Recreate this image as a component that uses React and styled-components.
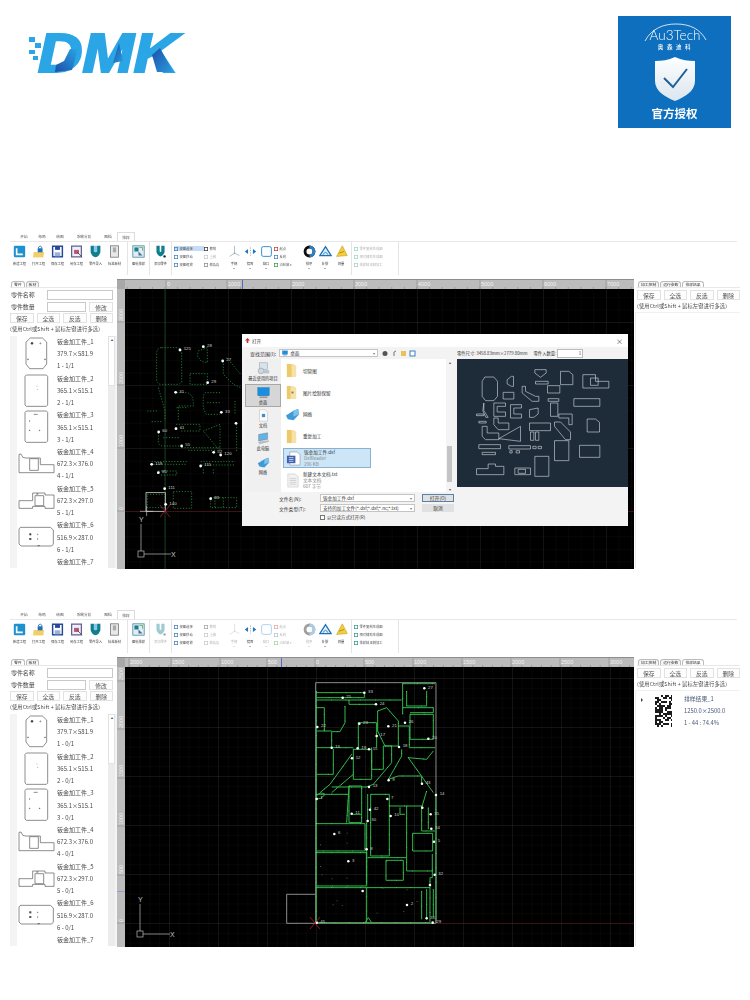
import React from 'react';
import styled, { createGlobalStyle } from 'styled-components';

const SANS = '"Noto Sans CJK SC", "Liberation Sans", sans-serif';

const GlobalStyle = createGlobalStyle`
  html, body {
    margin: 0;
    padding: 0;
    background: #fff;
    font-family: ${SANS};
  }
`;

/* ---------- data ---------- */

const parts = [
  { name: '钣金加工件_1', size: '379.7×581.9', shape: 1 },
  { name: '钣金加工件_2', size: '365.1×515.1', shape: 2 },
  { name: '钣金加工件_3', size: '365.1×515.1', shape: 3 },
  { name: '钣金加工件_4', size: '672.3×376.0', shape: 4 },
  { name: '钣金加工件_5', size: '672.3×297.0', shape: 5 },
  { name: '钣金加工件_6', size: '516.9×287.0', shape: 6 },
  { name: '钣金加工件_7', shape: 7 },
];

const files = [
  { icon: 'folder', name: '切管图' },
  { icon: 'folderDoc', name: '图片绘制保留' },
  { icon: 'net', name: '网络' },
  { icon: 'folder', name: '重复加工' },
  { icon: 'dxf', name: '钣金加工件.dxf', sub: ['DxfReader', '296 KB'], selected: true },
  { icon: 'txt', name: '新建文本文档.txt', sub: ['文本文档', '607 字节'] },
];

const places = [
  { icon: 'recent', label: '最近使用的项目' },
  { icon: 'desk', label: '桌面', active: true },
  { icon: 'docs', label: '文档' },
  { icon: 'pc', label: '此电脑' },
  { icon: 'net', label: '网络' },
];

const firstDots = [
  [180, 57, '125'], [250, 47, '28'], [308, 90, '27'], [263, 155, '29'], [167, 184, '31'],
  [304, 244, '33'], [168, 293, '61'], [116, 303, '60'], [348, 277, ''], [185, 345, '55'],
  [281, 364, '52'], [302, 372, '120'], [95, 400, '119'], [242, 405, '115'], [115, 425, '85'],
  [134, 473, '111'], [137, 520, '140'], [272, 503, '83'],
];

const firstLines = [
  'M125 50 H170 Q185 50 185 70 V150 Q185 160 170 160 H125 Q110 160 110 145 V70 Q110 50 125 50',
  'M235 60 L262 50 V95 L245 92 L232 75 Z',
  'M310 90 V130 L340 160 L362 170', 'M320 80 L362 130',
  'M210 128 H262 V160 H210 Z',
  'M115 170 L135 240 V270', 'M82 240 H115', 'M95 272 H125',
  'M170 185 H200 Q220 190 220 215 V225 H175 V270', 'M170 230 H205',
  'M300 185 H255 Q248 190 250 230 L258 250 H300', 'M262 215 H300',
  'M115 305 V335 Q118 345 130 345 H180', 'M130 320 H180',
  'M168 280 H240 V300 H180',
  'M300 280 L250 300 L300 360 Z',
  'M185 350 H300', 'M205 358 H290',
  'M95 392 H200', 'M100 400 H200',
  'M242 392 H345', 'M245 402 H345', 'M250 415 V428', 'M280 415 V428',
  'M115 420 H170 V432 H120',
  'M82 490 H135 V530 H82 Z', 'M160 482 H215 V532 H160 Z',
  'M272 500 H350 V530 H272 Z', 'M285 500 V530', 'M310 500 V530',
  'M345 210 V250', 'M350 280 V360',
];

const secondDots = [
  [283, 65, '33'], [218, 80, '25'], [318, 100, '24'], [142, 168, '22'], [268, 158, '23'],
  [355, 166, '21'], [405, 155, '26'], [463, 52, '27'], [475, 203, '20'], [320, 195, '17'],
  [185, 230, '16'], [263, 232, '19'], [297, 235, '15'], [387, 228, '18'], [246, 262, '12'],
  [297, 348, '13'], [356, 328, '9'], [456, 338, '43'], [498, 372, '14'], [352, 384, '7'],
  [140, 384, '1'], [300, 416, '42'], [245, 428, '11'], [362, 435, '10'], [293, 450, '30'],
  [457, 410, ''], [482, 430, '35'], [484, 473, '34'], [193, 489, '6'], [492, 512, '5'],
  [290, 535, '8'], [235, 571, '3'], [494, 611, '32'], [480, 642, ''], [278, 660, ''],
  [411, 702, '2'], [470, 742, '31'], [488, 755, '29'], [140, 755, '45'],
];

const secondLines = [
  'M139 60 V755', 'M139 65 H283 V80 H139', 'M139 87 H395', 'M237 87 V100 H320',
  'M139 110 H163 V180 H139', 'M163 180 H185', 'M225 105 V155 L210 182 H185 V230',
  'M139 230 H250', 'M190 235 V310 H139', 'M245 250 L180 340 L150 365', 'M250 310 L185 365',
  'M250 235 H305 V325 H250 Z', 'M305 230 V295 H340 V225 H365 V275 L310 340 L290 348 H185',
  'M265 155 H320 V230', 'M265 155 V235', 'M323 120 L350 110 L385 150 V225 H345 L323 180 Z',
  'M398 38 V130', 'M398 38 H495', 'M410 60 V105 H470 V60', 'M400 110 H490 V125 H420',
  'M420 130 H490 V205 H420 Z', 'M385 165 H418 V230 H495', 'M415 260 L490 365',
  'M415 260 L470 265 L490 240', 'M355 325 L395 255 V235', 'M355 325 L385 315 H455 V340',
  'M139 370 H237', 'M237 345 H275 V455 H237 Z', 'M237 345 L230 455', 'M245 430 H275',
  'M139 458 H285 V540 H139', 'M139 545 H290 V645 H139', 'M139 650 H290 V755 H139',
  'M290 650 H480 V755 H290', 'M302 370 H358 V555 H302 Z', 'M293 370 V450', 'M290 455 V640',
  'M358 405 H410 V600 H490', 'M410 405 H455 V480 H495', 'M428 487 H488 V540 H428 Z',
  'M348 568 H400 V628 H348 Z', 'M293 560 H410', 'M475 410 V475', 'M470 360 L455 410',
  'M498 370 V755', 'M487 550 V620 H480 V650', 'M490 655 V740', 'M455 660 V745', 'M470 655 V745',
  'M390 410 V430 H405', 'M285 755 L295 740 L305 755', 'M139 375 Q150 360 165 370 Q150 390 139 380',
];

const specks = [
  [150, 585], [185, 622], [230, 620], [155, 610], [200, 688], [215, 702], [188, 700], [320, 725],
  [230, 485], [230, 515], [150, 520], [338, 650], [410, 655], [440, 690], [400, 720],
];

const outlines = [
  'M728 157 H755 L766 170 V215 L755 228 H730 L720 215 V170 Z',
  'M795 165 L808 155 H814 V185 H808 L795 178 Z',
  'M878 135 H912 V145 L895 158 L878 145 Z',
  'M880 170 H918 V178 H880 Z',
  'M955 140 H980 L992 150 V180 H955 Z',
  'M1022 150 H1060 V170 H1100 V190 H1022 Z', 'M1045 160 H1068 V182 H1045 Z',
  'M783 203 H815 V223 H783 Z',
  'M840 185 H850 V200 L880 215 H890 V230 H870 L840 205 Z',
  'M916 183 H953 V205 H916 Z', 'M918 222 H950 V230 H918 Z',
  'M995 222 H1073 V245 H995 Z',
  'M755 235 H790 V245 H765 V262 H790 V275 H755 Z',
  'M805 240 H838 V250 H815 V268 H838 V280 H805 Z',
  'M862 255 L888 250 V268 L875 278 H862 Z',
  'M925 235 H947 V275 H925 Z', 'M950 268 H990 V300 H980 V280 H950 Z',
  'M1035 283 H1060 L1072 293 V322 H1035 Z',
  'M703 268 H725 V273 H703 Z', 'M710 290 H732 V295 H710 Z', 'M725 235 V258 L738 278 H731 L722 258 Z',
  'M755 280 H768 V295 H800 V315 H768 L755 300 Z',
  'M720 305 H735 V325 H770 V345 H730 L720 335 Z',
  'M835 305 L770 342 L835 350 Z',
  'M862 295 H925 V318 H862 Z', 'M865 322 H875 V347 H865 Z', 'M880 322 H890 V347 H880 Z',
  'M937 292 H955 L985 322 V345 H970 L937 305 Z',
  'M710 360 H775 V372 H710 Z', 'M720 383 H760 V390 H720 Z', 'M800 363 H865 V373 H800 Z',
  'M872 365 H882 V372 H872 Z', 'M888 365 H898 V372 H888 Z', 'M803 378 H810 V385 H803 Z', 'M822 378 H832 V385 H822 Z',
  'M937 348 H980 V408 H937 Z', 'M1012 362 H1073 V398 H1012 Z',
  'M703 432 H738 V418 H760 V425 H785 V450 H703 Z', 'M818 430 H865 V450 H818 Z', 'M828 434 H850 V446 H828 Z',
  'M878 395 H920 V455 H878 Z',
];

/* ---------- header ---------- */

const Page = styled.div`
  width: 750px;
  height: 1000px;
  overflow: hidden;
  background: #fff;
`;

const Header = styled.header`
  height: 232px;
  box-sizing: border-box;
  padding: 16px 19px 0 28px;
  display: flex;
  justify-content: space-between;
  align-items: flex-start;
`;

const LogoWrap = styled.div`
  margin-top: 15px;
  filter: blur(0.4px);
`;

const Badge = styled.div`
  width: 113px;
  height: 112px;
  background: #0e6fbe;
  color: #fff;
  display: flex;
  flex-direction: column;
  align-items: center;
  padding-top: 7px;
  box-sizing: border-box;
  filter: blur(0.3px);
`;

const BrandCn = styled.div`
  font-size: 5.5px;
  letter-spacing: 3.6px;
  margin: 0 0 5px 3px;
  line-height: 8px;
  font-weight: 500;
`;

const BadgeText = styled.div`
  font-size: 11.5px;
  font-weight: 700;
  line-height: 14px;
  margin-top: 4px;
`;

function Logo() {
  return (
    <LogoWrap>
      <svg width="170" height="46" viewBox="0 0 170 46">
        <defs>
          <linearGradient id="legFade" x1="0" y1="0" x2="1" y2="1">
            <stop offset="0" stopColor="#1c4fa8" />
            <stop offset="1" stopColor="#2a9be0" />
          </linearGradient>
          <linearGradient id="bowlFade" x1="0" y1="1" x2="1" y2="0">
            <stop offset="0" stopColor="#1c4fa8" />
            <stop offset="1" stopColor="#2aa5e6" />
          </linearGradient>
        </defs>
        <g fill="#2aa5e6">
          <rect x="1" y="6" width="6" height="5" />
          <rect x="7" y="12" width="6" height="5" />
          <rect x="1" y="19" width="6" height="4" />
          <rect x="5" y="25" width="5" height="4" />
        </g>
        <text transform="translate(10 41) scale(1.1 1)" fontFamily="Liberation Sans" fontWeight="700" fontStyle="italic" fontSize="56" fill="#2aa5e6" stroke="#2aa5e6" strokeWidth="2.2">DMK</text>
        <polygon points="27,41 44,39 50,18 42,18 36,30 28,34" fill="url(#bowlFade)" />
        <polygon points="85,32 91,12 95,30" fill="url(#legFade)" />
        <polygon points="124,24 132,17 145,41 129,41" fill="url(#legFade)" />
      </svg>
    </LogoWrap>
  );
}

function AuthBadge() {
  return (
    <Badge>
      <svg width="74" height="20" viewBox="0 0 74 20">
        <path d="M7 18 C14 5 26 1 38 1 C52 1 62 6 68 17" fill="none" stroke="#fff" strokeWidth="0.8" />
        <text x="37" y="17" textAnchor="middle" fontFamily="Lato" fontWeight="300" fontSize="13.5" fill="#fff">Au3Tech</text>
      </svg>
      <BrandCn>奥森迪科</BrandCn>
      <svg width="42" height="46" viewBox="0 0 42 46">
        <defs>
          <linearGradient id="shieldFade" x1="0" y1="0" x2="0" y2="1">
            <stop offset="0" stopColor="#fdfefe" />
            <stop offset="1" stopColor="#dbe6ee" />
          </linearGradient>
        </defs>
        <path d="M21 1 C28 4 34 5 41 5 V25 C41 35 31 41 21 45 C11 41 1 35 1 25 V5 C8 5 14 4 21 1 Z" fill="url(#shieldFade)" />
        <path d="M10 22 L19 31 L33 13" fill="none" stroke="#1f5f9a" strokeWidth="2" />
      </svg>
      <BadgeText>官方授权</BadgeText>
    </Badge>
  );
}

/* ---------- ribbon ---------- */

const Shot = styled.section`
  height: 336px;
  margin-bottom: ${(p) => p.$gap || 0}px;
  filter: blur(0.35px);
`;

const TabStrip = styled.div`
  height: 9px;
  margin-left: 10px;
  display: flex;
  align-items: stretch;
  padding-left: 5px;
`;

const RibbonTab = styled.div`
  width: ${(p) => p.$w || 18}px;
  font-size: 3.7px;
  line-height: 9px;
  text-align: center;
  color: #555;
  box-sizing: border-box;
  ${(p) => p.$active && `
    border: 1px solid #dcdcdc;
    border-bottom: none;
    background: #fff;
    line-height: 7px;
    padding-top: 1px;
  `}
`;

const Ribbon = styled.div`
  height: 36px;
  margin: 0 13px 2px 10px;
  border-top: 1px solid #e8e8e8;
  box-sizing: border-box;
  display: flex;
  align-items: stretch;
`;

const RibbonGroup = styled.div`
  display: flex;
  align-items: flex-start;
  width: ${(p) => (p.$w ? `${p.$w}px` : 'auto')};
  padding: 3px ${(p) => p.$pad ?? 1}px 0;
  border-right: 1px solid #e4e4e4;
  margin-bottom: 2px;
`;

const Tool = styled.div`
  width: ${(p) => p.$w || 19}px;
  display: flex;
  flex-direction: column;
  align-items: center;
  opacity: ${(p) => (p.$dim ? 0.4 : 1)};
`;

const ToolLabel = styled.span`
  font-size: 3.3px;
  line-height: 5px;
  color: #444;
  margin-top: 3px;
  white-space: nowrap;
`;

const ToolCaret = styled.span`
  width: 0;
  height: 0;
  margin-top: 2px;
  border-left: 1px solid transparent;
  border-right: 1px solid transparent;
  border-top: 1.5px solid #666;
`;

const SmallCol = styled.div`
  display: flex;
  flex-direction: column;
  gap: 3px;
  width: ${(p) => p.$w}px;
  padding-top: 1px;
`;

const SmallItem = styled.div`
  height: 5px;
  display: flex;
  align-items: center;
  gap: 1.5px;
  font-size: 3.3px;
  color: #555;
  white-space: nowrap;
  border-radius: 0;
  opacity: ${(p) => (p.$dim ? 0.45 : 1)};
  background: ${(p) => (p.$on ? '#c5dcf2' : 'transparent')};
`;

const iconArt = {
  tile: <><rect x="1" y="1" width="14" height="14" rx="1.5" fill="#1e92cf" /><path d="M4.5 4 V11.5 H12" fill="none" stroke="#fff" strokeWidth="2" /></>,
  open: <><path d="M2 9 H14 V15 H2 Z" fill="#e9b93e" /><path d="M1 15 L3 9 H15 L13 15 Z" fill="#f3cf68" /><rect x="7" y="4" width="6" height="5" fill="#1e6fb5" /><path d="M8 4 V2.5 Q10 0 12 2.5 V4" fill="none" stroke="#1e6fb5" /></>,
  disk: <><path d="M2 1.5 H14 V14.5 H2 Z" fill="#fff" stroke="#27479a" strokeWidth="1.8" /><rect x="5" y="2" width="6" height="4" fill="#27479a" /><rect x="4.5" y="9" width="7" height="5" fill="#9bb2d8" /></>,
  saveas: <><path d="M2 1.5 H14 V14.5 H2 Z" fill="#eef" stroke="#62608c" strokeWidth="1.5" /><rect x="5" y="6" width="6" height="5" fill="#b65a6a" /><path d="M9 9 L15 15" stroke="#444" /></>,
  magnet: <><path d="M2 1 H6 V8 Q8 10 10 8 V1 H14 V9 Q12 15 8 15 Q4 15 2 9 Z" fill="#0f7f8c" /><path d="M6 1 V8 Q8 10 10 8 V1" fill="#3da0e0" opacity="0.6" /></>,
  sheet: <><rect x="3" y="1" width="10" height="14" fill="#e8e8e8" stroke="#777" /><path d="M6 3 V9 H10 V3" fill="#aaa" /></>,
  nest: <><rect x="1" y="1" width="14" height="14" fill="#dfeef2" stroke="#4b8aa0" /><path d="M3 3 H8 V8 H3 Z" fill="#1b7e8e" /><path d="M8 8 L13 13 H8 Z" fill="#4a6a9a" /><path d="M9 3 H13 V7" fill="none" stroke="#5aa45a" /></>,
  add: <><path d="M3 1 H7 V8 Q8 9 9 8 V1 H13 V9 Q11 14 8 14 Q5 14 3 9 Z" fill="#0f7f8c" /><circle cx="13" cy="14" r="1.5" fill="#222" /></>,
  axis: <><path d="M8 1 V10 L2 14 M8 10 L14 13" fill="none" stroke="#8fb5d8" strokeWidth="1" /><circle cx="8" cy="10" r="1" fill="#e0a030" /></>,
  mirror: <><path d="M1 8 L5 5 V11 Z M15 8 L11 5 V11 Z" fill="#1e74c2" /><path d="M8 3 V13" stroke="#999" strokeDasharray="1.5 1.5" /></>,
  gap: <rect x="2" y="2" width="12" height="12" rx="2" fill="#fff" stroke="#2f8fd0" strokeWidth="1.2" />,
  order: <><circle cx="8" cy="8" r="5.5" fill="none" stroke="#111" strokeWidth="3.5" /><path d="M8 2.5 A5.5 5.5 0 0 1 8 13.5" fill="none" stroke="#2f7fc0" strokeWidth="3.5" /></>,
  offset: <><path d="M1 13 L8 2 L15 13 Z" fill="#dff0fa" stroke="#1d6fb5" strokeWidth="1.6" /><path d="M5 12 Q8 6 11 12" fill="none" stroke="#1d6fb5" /></>,
  measure: <><path d="M2 14 L9 1 L15 13 Z" fill="#f2cf3e" stroke="#c9a020" strokeWidth="0.8" /><path d="M5 10 L11 8" stroke="#a98010" /></>,
};

const Mini = ({ c = '#3a7fc0' }) => (
  <svg width="4" height="4" viewBox="0 0 4 4"><rect x="0.3" y="0.3" width="3.4" height="3.4" fill="none" stroke={c} strokeWidth="0.8" /></svg>
);

function BigTool({ icon, label, dim, caret, w }) {
  return (
    <Tool $dim={dim} $w={w}>
      <svg width="13" height="13" viewBox="0 0 16 16">{iconArt[icon]}</svg>
      <ToolLabel>{label}</ToolLabel>
      {caret && <ToolCaret />}
    </Tool>
  );
}

function RibbonBar({ second }) {
  return (
    <Ribbon>
      <RibbonGroup $pad={0} $w={117}>
        <BigTool icon="tile" label="新建工程" />
        <BigTool icon="open" label="打开工程" />
        <BigTool icon="disk" label="保存工程" />
        <BigTool icon="saveas" label="另存工程" />
        <BigTool icon="magnet" label="零件导入" />
        <BigTool icon="sheet" label="标准板材" />
      </RibbonGroup>
      <RibbonGroup $pad={1}>
        <BigTool icon="nest" label="图纸排样" />
      </RibbonGroup>
      <RibbonGroup $pad={1}>
        <BigTool icon="add" label="添加零件" dim={second} />
      </RibbonGroup>
      <RibbonGroup $pad={2}>
        <SmallCol $w={30}>
          <SmallItem $on={!second}><Mini />视图选择</SmallItem>
          <SmallItem><Mini />视图移动</SmallItem>
          <SmallItem><Mini />视图缩放</SmallItem>
        </SmallCol>
        <SmallCol $w={22}>
          <SmallItem $dim={second}><Mini c="#333" />撤销</SmallItem>
          <SmallItem $dim><Mini c="#888" />重做</SmallItem>
          <SmallItem $dim={second}><Mini c="#888" />倒角角</SmallItem>
        </SmallCol>
        <BigTool icon="axis" label="手柄" caret dim={second} w={16} />
        <BigTool icon="mirror" label="镜面" caret w={16} />
        <BigTool icon="gap" label="缺口" caret dim={second} w={16} />
        <SmallCol $w={27}>
          <SmallItem $dim={second}><Mini c="#c0392b" />起点</SmallItem>
          <SmallItem $dim={second}><Mini />反向</SmallItem>
          <SmallItem $dim={second}><Mini c="#3a9a3a" />沿轮廓 ▾</SmallItem>
        </SmallCol>
        <BigTool icon="order" label="排序" caret dim={second} w={16} />
        <BigTool icon="offset" label="补偿" caret w={16} />
        <BigTool icon="measure" label="测量" w={16} />
      </RibbonGroup>
      <RibbonGroup $pad={2}>
        <SmallCol $w={42}>
          <SmallItem $dim={!second}><Mini c="#2c9a8a" />零件复制生成图</SmallItem>
          <SmallItem $dim={!second}><Mini c="#2c9a8a" />相对辅助生成图</SmallItem>
          <SmallItem $dim={!second}><Mini c="#2c9a8a" />排样结果刻加工</SmallItem>
        </SmallCol>
      </RibbonGroup>
    </Ribbon>
  );
}

/* ---------- side panels ---------- */

const Body = styled.div`
  height: 289px;
  display: flex;
  padding-left: 10px;
`;

const LeftPanel = styled.aside`
  width: 107px;
  display: flex;
  flex-direction: column;
  font-size: 5.8px;
  color: #4a4a4a;
`;

const RightPanel = styled.aside`
  width: 103px;
  margin-left: 3px;
  display: flex;
  flex-direction: column;
  font-size: 5.8px;
  color: #4a4a4a;
`;

const PanelTabs = styled.div`
  height: 9px;
  padding: 2px 0 0 1px;
  box-sizing: border-box;
  display: flex;
  border-bottom: 1px solid #e8e8e8;
`;

const PanelTab = styled.span`
  font-size: 3.8px;
  line-height: 6px;
  padding: 0 2px;
  border: 1px solid #bbb;
  border-bottom: none;
  border-radius: 3px 3px 0 0;
  margin-right: 1px;
  color: #333;
  background: ${(p) => (p.$active ? '#fff' : '#f6f6f6')};
`;

const FieldRow = styled.div`
  height: 10px;
  margin-top: 2px;
  margin-right: 4px;
  display: flex;
  gap: 1px;
  align-items: center;
  line-height: 10px;
  white-space: nowrap;
  padding-left: 1px;
`;

const FieldLabel = styled.span`
  width: 35px;
  letter-spacing: -0.1px;
  font-size: 6px;
`;

const TextBox = styled.div`
  flex: 1;
  height: 100%;
  box-sizing: border-box;
  border: 1px solid #c9c9c9;
  background: #fff;
`;

const PanelButton = styled.div`
  flex: 1;
  height: 10px;
  line-height: 9px;
  box-sizing: border-box;
  border: 1px solid #e2e2e2;
  text-align: center;
  font-size: 5.8px;
  background: #fdfdfd;
  color: #555;
`;

const ModifyButton = styled(PanelButton)`
  flex: none;
  width: 24px;
  margin-left: 2px;
`;

const ButtonRow = styled.div`
  display: flex;
  gap: 3px;
  margin-top: ${(p) => p.$top || 1}px;
  margin-right: ${(p) => p.$right || 0}px;
`;

const Hint = styled.div`
  font-size: 5.3px;
  line-height: 10px;
  margin-top: 1px;
  white-space: nowrap;
  letter-spacing: 0.02em;
`;

const ListFrame = styled.div`
  flex: 1;
  min-height: 0;
  margin-top: 2px;
  display: flex;
  background: #f4f4f4;
  padding-left: 7px;
  padding-right: 2px;
`;

const PartList = styled.div`
  flex: 1;
  background: #fff;
  overflow: hidden;
`;

const ScrollBar = styled.div`
  width: 7px;
  background: #ececec;
`;

const ScrollThumb = styled.div`
  height: ${(p) => p.$h}px;
  background: #fff;
  border: 1px solid #e2e2e2;
  box-sizing: border-box;
  font-size: 4px;
  line-height: 5px;
  text-align: center;
  color: #333;
`;

const PartRow = styled.div`
  height: 36.7px;
  display: flex;
  align-items: flex-start;
`;

const Thumb = styled.svg`
  width: 40px;
  height: 36.7px;
  flex: none;
`;

const PartText = styled.div`
  display: flex;
  flex-direction: column;
  font-size: 6px;
  line-height: 12.2px;
  white-space: nowrap;
`;

const partArt = {
  1: <><path d="M40 6 H76 L89 18 V84 L78 98 H38 L27 84 V18 Z" /><circle cx="45" cy="22" r="3" fill="#222" /><circle cx="70" cy="22" r="1.5" /><circle cx="33" cy="70" r="1.5" /><circle cx="84" cy="70" r="1.5" /></>,
  2: <><path d="M28 6 H88 L92 10 V96 L88 100 H28 L24 96 V10 Z" /><path d="M60 38 V40 M62 48 V50" /></>,
  3: <><path d="M28 6 H88 L92 10 V96 L88 100 H28 L24 96 V10 Z" /><path d="M50 16 H62" /><circle cx="38" cy="36" r="1" /><circle cx="38" cy="64" r="1" fill="#222" /><circle cx="68" cy="64" r="1" fill="#222" /></>,
  4: <><path d="M6 80 V25 L12 24 Q16 38 26 36 H70 V56 H111 V80 Z" /><path d="M38 38 H64 V73 H38 Z" /></>,
  5: <><path d="M6 76 V53 H47 V30 H84 V36 H111 V76 H84 V70 H47 V76 Z" /><path d="M54 38 H80 V68 H54 Z" /><path d="M58 33 H64" strokeWidth="3" /></>,
  6: <><path d="M10 25 H100 L109 33 V75 L104 81 H12 L6 75 V30 Z" /><rect x="38" y="44" width="4" height="4" fill="#222" /><rect x="38" y="58" width="4" height="4" fill="#222" /><circle cx="62" cy="46" r="1" /><circle cx="62" cy="60" r="1" /><path d="M62 80 H68" strokeWidth="3" /></>,
  7: <path d="M6 44 L12 38 H104 L109 44" />,
};

function PartsPanel({ done }) {
  return (
    <LeftPanel>
      <PanelTabs>
        <PanelTab $active>零件</PanelTab>
        <PanelTab>板材</PanelTab>
      </PanelTabs>
      <FieldRow>
        <FieldLabel>零件名称</FieldLabel>
        <TextBox />
      </FieldRow>
      <FieldRow>
        <FieldLabel>零件数量</FieldLabel>
        <TextBox />
        <ModifyButton>修改</ModifyButton>
      </FieldRow>
      <ButtonRow $top={1} $right={4}>
        <PanelButton>保存</PanelButton>
        <PanelButton>全选</PanelButton>
        <PanelButton>反选</PanelButton>
        <PanelButton>删除</PanelButton>
      </ButtonRow>
      <Hint>(使用Ctrl或Shift + 鼠标左键进行多选)</Hint>
      <ListFrame>
        <PartList>
          {parts.map((part, i) => (
            <PartRow key={part.name}>
              <Thumb viewBox="0 0 120 110" fill="#fff" stroke="#555" strokeWidth="2">
                {partArt[part.shape]}
              </Thumb>
              <PartText>
                <span>{part.name}</span>
                {part.size && <span>{part.size}</span>}
                {part.size && <span>{i + 1} - {done}/1</span>}
              </PartText>
            </PartRow>
          ))}
        </PartList>
        <ScrollBar>
          <ScrollThumb $h={50}>▴</ScrollThumb>
        </ScrollBar>
      </ListFrame>
    </LeftPanel>
  );
}

const ResultList = styled.div`
  flex: 1;
  margin-top: 1px;
  margin-left: -2px;
  border-left: 1px solid #ececec;
  border-top: 1px solid #f0f0f0;
  background: #fff;
`;

const ResultRow = styled.div`
  display: flex;
  align-items: flex-start;
  padding: 4px 0 0 5px;
`;

const ResultCaret = styled.span`
  width: 0;
  height: 0;
  margin-top: 3px;
  border-top: 2px solid transparent;
  border-bottom: 2px solid transparent;
  border-left: 2.5px solid #444;
`;

const ResultThumb = styled.svg`
  margin-left: 12px;
  flex: none;
`;

const ResultText = styled.div`
  margin-left: 12px;
  font-size: 5.8px;
  line-height: 12.2px;
  color: #4a5a78;
  margin-top: -2px;
  display: flex;
  flex-direction: column;
`;

function resultCells() {
  const cells = [];
  let seed = 17;
  for (let y = 0; y < 32; y += 2) {
    for (let x = 0; x < 17; x += 2) {
      seed = (seed * 73 + 41) % 101;
      if (seed % 5 < 2) cells.push(<rect key={`${x}-${y}`} x={x} y={y} width="2" height="2" fill="#fff" />);
    }
  }
  return cells;
}

function ControlPanel({ result }) {
  return (
    <RightPanel>
      <PanelTabs>
        <PanelTab>加工控制</PanelTab>
        <PanelTab>运行参数</PanelTab>
        <PanelTab $active>排样结果</PanelTab>
      </PanelTabs>
      <ButtonRow $top={2}>
        <PanelButton>保存</PanelButton>
        <PanelButton>全选</PanelButton>
        <PanelButton>反选</PanelButton>
        <PanelButton>删除</PanelButton>
      </ButtonRow>
      <Hint>(使用Ctrl或Shift + 鼠标左键进行多选)</Hint>
      <ResultList>
        {result && (
          <ResultRow>
            <ResultCaret />
            <ResultThumb width="17" height="32" viewBox="0 0 17 32">
              <rect width="17" height="32" fill="#1c1c1c" />
              {resultCells()}
            </ResultThumb>
            <ResultText>
              <span>排样结果_1</span>
              <span>1250.0×2500.0</span>
              <span>1 - 44 : 74.4%</span>
            </ResultText>
          </ResultRow>
        )}
      </ResultList>
    </RightPanel>
  );
}

/* ---------- cad canvas ---------- */

const CanvasGrid = styled.div`
  width: 517px;
  display: grid;
  grid-template-columns: 8px 509px;
  grid-template-rows: 9px 280px;
  background: #b4b4b4;
  border-top: 1px solid #8d8d8d;
  box-sizing: border-box;
`;

const RulerCorner = styled.div`
  background: #a8a8a8;
`;

const RulerSvg = styled.svg`
  display: block;
  background: #bcbcbc;
`;

const View = styled.div`
  position: relative;
  overflow: hidden;
  background-color: #000;
  background-image:
    linear-gradient(to right, rgba(255, 255, 255, 0.05) 1px, transparent 1px),
    linear-gradient(to bottom, rgba(255, 255, 255, 0.05) 1px, transparent 1px),
    linear-gradient(to right, rgba(255, 255, 255, 0.024) 1px, transparent 1px),
    linear-gradient(to bottom, rgba(255, 255, 255, 0.024) 1px, transparent 1px);
  background-size:
    ${(p) => p.$pitch}px ${(p) => p.$pitch}px,
    ${(p) => p.$pitch}px ${(p) => p.$pitch}px,
    ${(p) => p.$pitch / 5}px ${(p) => p.$pitch / 5}px,
    ${(p) => p.$pitch / 5}px ${(p) => p.$pitch / 5}px;
  background-position: ${(p) => p.$ox}px ${(p) => p.$oy}px;
`;

const DrawingSvg = styled.svg`
  position: absolute;
  inset: 0;
  display: block;
`;

function Rulers({ top, marks, sideMark, hLabels, vLabels, pitch, originX }) {
  const ticks = [];
  for (let x = originX % (pitch / 5); x < 640; x += pitch / 5) {
    if (x > 125) ticks.push(x);
  }
  return (
    <>
      <RulerCorner />
      <RulerSvg width="509" height="9" viewBox="125 0 509 9">
        {ticks.map((x) => <path key={x} d={`M${x} 7 V9`} stroke="#777" strokeWidth="0.5" />)}
        {hLabels.map(([x, t]) => (
          <g key={t + x}>
            <path d={`M${x - 1} 0 V9`} stroke="#8a8a8a" strokeWidth="0.6" />
            <text x={x} y="6" fontFamily="Liberation Sans" fontSize="5.5" fill="#f2f2f2">{t}</text>
          </g>
        ))}
        <rect x={marks} y="0" width="1" height="9" fill="#5468c8" />
      </RulerSvg>
      <RulerSvg width="8" height="280" viewBox={`0 ${top} 8 280`}>
        {vLabels.map(([y, t]) => (
          <g key={t + y}>
            <path d={`M0 ${y} H8`} stroke="#8a8a8a" strokeWidth="0.6" />
            <text x="6" y={y - 1} transform={`rotate(-90 6 ${y - 1})`} fontFamily="Liberation Sans" fontSize="5.5" fill="#f2f2f2">{t}</text>
          </g>
        ))}
        {sideMark && <rect x="0" y={sideMark} width="8" height="0.6" fill="#7a88d0" />}
      </RulerSvg>
    </>
  );
}

function Marks({ dots, size = 4.2, text = 13 }) {
  return dots.map(([x, y, t]) => (
    <g key={`${x}-${y}`}>
      <circle cx={x} cy={y} r={size} fill="#fff" />
      {t && <text x={x + 11} y={y + 1} fontFamily="Liberation Sans" fontSize={text} fill="#cfcfcf">{t}</text>}
    </g>
  ));
}

function AxisGlyph({ x, y }) {
  return (
    <g fill="none" stroke="#b9b9b9" strokeWidth="0.7">
      <rect x={x - 3} y={y - 3} width="6" height="6" />
      <path d={`M${x} ${y - 3} V${y - 30} M${x + 3} ${y} H${x + 30}`} />
      <text x={x - 2} y={y - 32} fontFamily="Liberation Sans" fontSize="7" fill="#c5c5c5" stroke="none">Y</text>
      <text x={x + 30} y={y + 2.5} fontFamily="Liberation Sans" fontSize="7" fill="#c5c5c5" stroke="none">X</text>
    </g>
  );
}

function RedCross({ x, y }) {
  return <path d={`M${x - 5} ${y - 6} L${x + 5} ${y + 6} M${x + 5} ${y - 6} L${x - 5} ${y + 6}`} stroke="#a3202f" strokeWidth="0.8" />;
}

function FirstDrawing() {
  return (
    <DrawingSvg width="509" height="280" viewBox="125 288 509 280">
      <path d="M165 288 V568" stroke="#123a1c" strokeWidth="1" />
      <path d="M125 510.5 H634" stroke="#4a1218" strokeWidth="0.8" />
      <g transform="translate(120 330) scale(0.3333)">
        <g fill="none" stroke="#2c9a3e" strokeWidth="2.4" strokeDasharray="3.5 5">
          {firstLines.map((d) => <path key={d} d={d} />)}
        </g>
        <rect x="78" y="485" width="58" height="56" fill="none" stroke="#d0d0d0" strokeWidth="2.4" />
        <path d="M60 541 H100 M80 525 V555" stroke="#c8c8c8" strokeWidth="2" />
        <Marks dots={firstDots} />
      </g>
      <RedCross x={165} y={510} />
      <AxisGlyph x={141} y={553} />
    </DrawingSvg>
  );
}

function SecondDrawing() {
  return (
    <DrawingSvg width="510" height="280" viewBox="125 666 510 280">
      <path d="M316 922.5 H635" stroke="#4a1218" strokeWidth="0.8" />
      <g transform="translate(270 670) scale(0.3333)">
        <path d="M137 35 H498 V757 H137 Z M137 670 H50 V757 H137" fill="none" stroke="#a0a0a0" strokeWidth="2.6" />
        <g fill="none" stroke="#30b84a" strokeWidth="3">
          {secondLines.map((d) => <path key={d} d={d} />)}
        </g>
        <g fill="none" stroke="#a6f0b2" strokeWidth="1.6" strokeDasharray="2 42">
          {secondLines.map((d) => <path key={d} d={d} />)}
        </g>
        {specks.map(([x, y]) => <rect key={`${x}-${y}`} x={x} y={y} width="3" height="3" fill="#2f6a3a" />)}
        <Marks dots={secondDots} size={3.8} />
      </g>
      <RedCross x={315} y={922} />
      <AxisGlyph x={140} y={933} />
    </DrawingSvg>
  );
}

/* ---------- open file dialog ---------- */

const Dialog = styled.div`
  position: absolute;
  left: 117px;
  top: 45px;
  width: 386px;
  height: 192px;
  background: #f3f3f3;
  display: flex;
  flex-direction: column;
  font-size: 5px;
  color: #333;
`;

const DialogTitle = styled.div`
  height: 13px;
  flex: none;
  padding: 0 5px 0 3px;
  background: #fff;
  display: flex;
  align-items: center;
  gap: 2px;
  font-size: 4.6px;
`;

const CloseMark = styled.span`
  margin-left: auto;
  font-size: 7px;
  color: #444;
`;

const DialogBody = styled.div`
  flex: 1;
  display: grid;
  grid-template-columns: 209px 171px;
  column-gap: 3px;
  padding-left: 3px;
`;

const DialogColumn = styled.div`
  display: flex;
  flex-direction: column;
`;

const LookRow = styled.div`
  height: 12px;
  display: flex;
  align-items: center;
  gap: 3px;
  padding-left: 5px;
  white-space: nowrap;
`;

const Combo = styled.div`
  width: ${(p) => p.$w}px;
  height: ${(p) => p.$h || 8}px;
  box-sizing: border-box;
  background: #fff;
  border: 1px solid #c4c4c4;
  display: flex;
  align-items: center;
  gap: 2px;
  padding: 0 2px;
  font-size: 4.6px;
  white-space: nowrap;
  overflow: hidden;
  &::after {
    content: '▾';
    margin-left: auto;
    font-size: 4px;
    color: #777;
  }
`;

const Browser = styled.div`
  height: 133px;
  display: flex;
`;

const PlaceBar = styled.div`
  width: 36px;
  background: #f0f0f0;
  display: flex;
  flex-direction: column;
  padding-top: 1px;
`;

const Place = styled.div`
  height: ${(p) => (p.$active ? 23 : 23.5)}px;
  display: flex;
  flex-direction: column;
  align-items: center;
  justify-content: center;
  font-size: 4.2px;
  white-space: nowrap;
  box-sizing: border-box;
  ${(p) => p.$active && 'background: #d6d6d6; border: 1px solid #a8a8a8;'}
`;

const FileList = styled.div`
  width: 165px;
  background: #fff;
  display: flex;
  flex-direction: column;
  padding-top: 1px;
`;

const FileRow = styled.div`
  width: 88px;
  height: ${(p) => (p.$selected ? 20 : 21.8)}px;
  margin: ${(p) => (p.$selected ? '1px 0 1px 2px' : '0 0 0 2px')};
  box-sizing: border-box;
  display: flex;
  align-items: center;
  gap: 3px;
  padding-left: 2px;
  background: ${(p) => (p.$selected ? '#cce6f8' : 'transparent')};
  border: ${(p) => (p.$selected ? '1px solid #8ab1cf' : 'none')};
`;

const FileText = styled.div`
  display: flex;
  flex-direction: column;
  font-size: 4.6px;
  line-height: 6.3px;
  white-space: nowrap;
`;

const FileSub = styled.span`
  color: #888;
`;

const FileScroll = styled.div`
  width: 7px;
  background: #f4f4f4;
  display: flex;
  flex-direction: column;
  align-items: center;
  font-size: 4px;
  color: #555;
`;

const FileThumb = styled.div`
  margin-top: auto;
  margin-bottom: 4px;
  width: 5px;
  height: 36px;
  background: #c4c4c4;
`;

const FormGrid = styled.div`
  display: grid;
  grid-template-columns: 36px 95px 36px;
  align-items: center;
  row-gap: 2px;
  column-gap: 3px;
  padding: 2px 0 0 36px;
`;

const FormLabel = styled.span`
  font-size: 4.8px;
  white-space: nowrap;
  margin-left: -2px;
`;

const DialogButton = styled.div`
  height: 8px;
  box-sizing: border-box;
  margin-left: 4px;
  text-align: center;
  line-height: 6px;
  font-size: 4.8px;
  background: #e1e1e1;
  border: 1px solid ${(p) => (p.$primary ? '#5a7fa8' : '#e1e1e1')};
`;

const CheckLine = styled.div`
  grid-column: 2 / 4;
  display: flex;
  align-items: center;
  gap: 2px;
  font-size: 4.6px;
`;

const CheckBox = styled.span`
  width: 5px;
  height: 5px;
  border: 1px solid #777;
  background: #fff;
  box-sizing: border-box;
`;

const SizeRow = styled.div`
  height: 12px;
  display: flex;
  align-items: center;
  gap: 6px;
  font-size: 4.3px;
  white-space: nowrap;
`;

const CountBox = styled.div`
  width: 26px;
  height: 9px;
  box-sizing: border-box;
  border: 1px solid #bbb;
  background: #fff;
  text-align: right;
  line-height: 7px;
  padding-right: 1px;
  margin-left: -5px;
`;

const Preview = styled.svg`
  display: block;
  width: 171px;
  height: 128px;
  background: #1e2c39;
`;

const GlyphSvg = styled.svg`
  flex: none;
`;

const fileIcons = {
  folder: <><path d="M2 1 H9 L12 3 V15 H2 Z" fill="#f6e2a6" /><path d="M2 1 H7 V15 H2 Z" fill="#ecc96a" /></>,
  folderDoc: <><path d="M2 1 H9 L12 3 V15 H2 Z" fill="#f6e2a6" /><path d="M2 1 H6 V15 H2 Z" fill="#ecc96a" /><rect x="7" y="7" width="2" height="2" fill="#777" /></>,
  net: <><path d="M1 9 L9 4 L14 2 L15 8 L9 14 L3 13 Z" fill="#3f9ad8" /><path d="M9 4 L14 2 L15 8 L9 10 Z" fill="#7cc0ec" /></>,
  dxf: <><path d="M4 1 H12 L15 4 V15 H4 Z" fill="#fff" stroke="#888" strokeWidth="0.6" /><rect x="1" y="5" width="9" height="8" fill="#3c5fb0" /><path d="M3 7 H8 M3 9 H8 M3 11 H8" stroke="#fff" strokeWidth="0.7" /></>,
  txt: <><path d="M3 1 H11 L14 4 V15 H3 Z" fill="#f2f2f2" stroke="#bbb" strokeWidth="0.5" /><path d="M5 6 H12 M5 8 H12 M5 10 H12 M5 12 H12" stroke="#bbb" strokeWidth="0.6" /></>,
  recent: <><rect x="3" y="1" width="10" height="8" fill="#d8e2ea" stroke="#8a9aa8" strokeWidth="0.6" /><circle cx="5" cy="11" r="3.5" fill="#cfd8e0" stroke="#7a8a98" strokeWidth="0.6" /><rect x="8" y="10" width="7" height="4" fill="#b8c4ce" /></>,
  desk: <><rect x="1" y="2" width="14" height="10" fill="#1a8fe0" stroke="#1570b0" strokeWidth="0.5" /><rect x="3" y="13" width="10" height="1.5" fill="#888" /></>,
  docs: <><path d="M3 1 H10 L13 4 V15 H3 Z" fill="#fbfbfb" stroke="#aaa" strokeWidth="0.5" /><rect x="6" y="6" width="4" height="4" fill="#3a8fd0" /></>,
  pc: <><path d="M2 3 L13 1 V9 L2 11 Z" fill="#64b2ea" stroke="#555" strokeWidth="0.4" /><path d="M1 12 L14 10 L15 12 L3 15 Z" fill="#bbb" /></>,
};

const FileGlyph = ({ kind, size = 13 }) => (
  <GlyphSvg width={size} height={size} viewBox="0 0 16 16">{fileIcons[kind]}</GlyphSvg>
);

function OpenDialog() {
  return (
    <Dialog>
      <DialogTitle>
        <svg width="5" height="5" viewBox="0 0 6 6"><path d="M3 0 L6 3 H4 V6 H2 V3 H0 Z" fill="#c8322c" /></svg>
        打开
        <CloseMark>×</CloseMark>
      </DialogTitle>
      <DialogBody>
        <DialogColumn>
          <LookRow>
            查找范围(I):
            <Combo $w={99}><FileGlyph kind="desk" size={6} />桌面</Combo>
            <svg width="36" height="7" viewBox="0 0 36 7">
              <circle cx="4" cy="3.5" r="2.5" fill="#555" />
              <path d="M13 6 V2 L15 1" fill="none" stroke="#777" />
              <rect x="20" y="1" width="5" height="5" fill="#e9c25a" />
              <rect x="29" y="1" width="5" height="5" fill="#fff" stroke="#3a7fc0" />
            </svg>
          </LookRow>
          <Browser>
            <PlaceBar>
              {places.map((place) => (
                <Place key={place.label} $active={place.active}>
                  <FileGlyph kind={place.icon} />
                  {place.label}
                </Place>
              ))}
            </PlaceBar>
            <FileList>
              {files.map((file) => (
                <FileRow key={file.name} $selected={file.selected}>
                  <FileGlyph kind={file.icon} size={15} />
                  <FileText>
                    <span>{file.name}</span>
                    {file.sub && file.sub.map((line) => <FileSub key={line}>{line}</FileSub>)}
                  </FileText>
                </FileRow>
              ))}
            </FileList>
            <FileScroll>
              ▴
              <FileThumb />
              ▾
            </FileScroll>
          </Browser>
          <FormGrid>
            <FormLabel>文件名(N):</FormLabel>
            <Combo $w={95}>钣金加工件.dxf</Combo>
            <DialogButton $primary>打开(O)</DialogButton>
            <FormLabel>文件类型(T):</FormLabel>
            <Combo $w={95}>支持的加工文件(*.dxf;*.dxf;*.nc;*.txt)</Combo>
            <DialogButton>取消</DialogButton>
            <span />
            <CheckLine><CheckBox />以只读方式打开(R)</CheckLine>
          </FormGrid>
        </DialogColumn>
        <DialogColumn>
          <SizeRow>
            <span>零件尺寸: 3458.83mm×2779.80mm</span>
            <span>零件入数量:</span>
            <CountBox>1</CountBox>
          </SizeRow>
          <Preview viewBox="645 103 512 384">
            <g fill="none" stroke="#d8dfe4" strokeWidth="1.8">
              {outlines.map((d) => <path key={d} d={d} />)}
            </g>
          </Preview>
        </DialogColumn>
      </DialogBody>
    </Dialog>
  );
}

/* ---------- page ---------- */

const RibbonTabs = () => (
  <TabStrip>
    <RibbonTab>开始</RibbonTab>
    <RibbonTab>布局</RibbonTab>
    <RibbonTab>绘图</RibbonTab>
    <RibbonTab $w={30}>系统分析</RibbonTab>
    <RibbonTab>图档</RibbonTab>
    <RibbonTab $active>排样</RibbonTab>
  </TabStrip>
);

const firstRuler = [[167, '0'], [228, '1000'], [292, '2000'], [355, '3000'], [418, '4000'], [481, '5000'], [544, '6000'], [607, '7000']];
const secondRuler = [[130, '2000'], [172, '1500'], [221, '1000'], [268, '500'], [316, '0'], [365, '500'], [414, '1000'], [463, '1500'], [512, '2000'], [561, '2500'], [610, '3000']];

export default function App() {
  return (
    <Page>
      <GlobalStyle />
      <Header>
        <Logo />
        <AuthBadge />
      </Header>

      <Shot $gap={42}>
        <RibbonTabs />
        <RibbonBar />
        <Body>
          <PartsPanel done="1" />
          <CanvasGrid>
            <Rulers
              top={288}
              marks={242}
              pitch={63}
              originX={165}
              hLabels={firstRuler}
              vLabels={[[321, '3000'], [384, '2000'], [447, '1000'], [510, '0']]}
            />
            <View $pitch={63} $ox={40} $oy={222}>
              <FirstDrawing />
              <OpenDialog />
            </View>
          </CanvasGrid>
          <ControlPanel />
        </Body>
      </Shot>

      <Shot>
        <RibbonTabs />
        <RibbonBar second />
        <Body>
          <PartsPanel done="0" />
          <CanvasGrid>
            <Rulers
              top={666}
              marks={281}
              sideMark={890}
              pitch={49}
              originX={316}
              hLabels={secondRuler}
              vLabels={[[680, '2500'], [728, '2000'], [777, '1500'], [825, '1000'], [874, '500'], [922, '0']]}
            />
            <View $pitch={49} $ox={191} $oy={256}>
              <SecondDrawing />
            </View>
          </CanvasGrid>
          <ControlPanel result />
        </Body>
      </Shot>
    </Page>
  );
}
